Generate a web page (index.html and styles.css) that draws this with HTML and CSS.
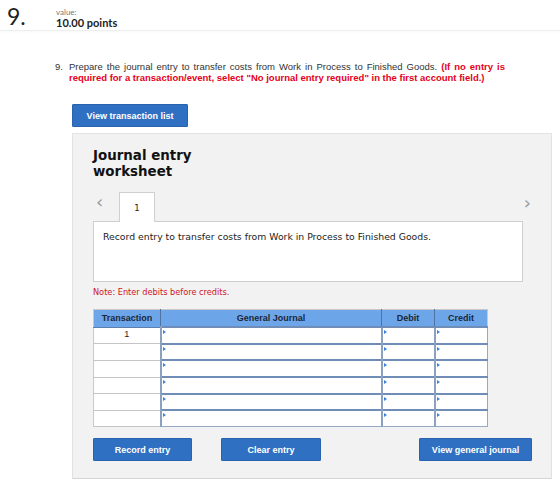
FILE: index.html
```html
<!DOCTYPE html>
<html lang="en">
<head>
    <meta charset="utf-8"/>
    <title>Question 9</title>
    <link rel="stylesheet" href="styles.css">
</head>
<body>
    <div class="q-header">
        <div class="q-num">9.</div>
        <div class="q-value">
            <div class="value-label">value:</div>
            <div class="value-points">10.00 points</div>
        </div>
    </div>

    <div class="prompt">
        <span class="prompt-num">9.</span>
        <div class="prompt-text">
            <p class="line-full">Prepare the journal entry to transfer costs from Work in Process to Finished Goods. <strong class="warn">(If no entry is</strong></p>
            <p><strong class="warn">required for a transaction/event, select "No journal entry required" in the first account field.)</strong></p>
        </div>
    </div>

    <button class="btn btn-list">View transaction list</button>

    <div class="worksheet">
        <h2 class="ws-title">Journal entry<br>worksheet</h2>

        <div class="tabs">
            <span class="arrow">&lsaquo;</span>
            <span class="tab">1</span>
            <span class="arrow arrow-next">&rsaquo;</span>
        </div>
        <div class="entry-box">Record entry to transfer costs from Work in Process to Finished Goods.</div>

        <div class="note">Note: Enter debits before credits.</div>

        <table class="journal">
            <thead>
                <tr>
                    <th class="c-tr">Transaction</th>
                    <th class="c-gj">General Journal</th>
                    <th class="c-amt">Debit</th>
                    <th class="c-amt">Credit</th>
                </tr>
            </thead>
            <tbody>
                <tr><td class="num">1</td><td class="inp"></td><td class="inp"></td><td class="inp"></td></tr>
                <tr><td class="num"></td><td class="inp"></td><td class="inp"></td><td class="inp"></td></tr>
                <tr><td class="num"></td><td class="inp"></td><td class="inp"></td><td class="inp"></td></tr>
                <tr><td class="num"></td><td class="inp"></td><td class="inp"></td><td class="inp"></td></tr>
                <tr><td class="num"></td><td class="inp"></td><td class="inp"></td><td class="inp"></td></tr>
                <tr><td class="num"></td><td class="inp"></td><td class="inp"></td><td class="inp"></td></tr>
            </tbody>
        </table>

        <div class="actions">
            <button class="btn btn-record">Record entry</button>
            <button class="btn btn-clear">Clear entry</button>
            <button class="btn btn-view">View general journal</button>
        </div>
    </div>
</body>
</html>
```

FILE: styles.css
```css
body {
    margin: 0;
    font-family: "Liberation Sans", Arial, sans-serif;
    color: #333;
    background: #fff;
}
.q-header {
    display: flex;
    align-items: flex-start;
    height: 31px;
    padding: 5px 0 0 7px;
    box-sizing: border-box;
    border-bottom: 1px solid #eee;
    box-shadow: 0 1px 2px rgba(0, 0, 0, 0.03);
}
.q-num {
    font-family: Lato, sans-serif;
    font-size: 23px;
    line-height: 22px;
    color: #222;
    width: 49px;
}
.q-value {
    font-family: Lato, sans-serif;
}
.value-label {
    font-size: 8px;
    line-height: 9px;
    color: #777;
    margin-top: 3px;
}
.value-points {
    font-size: 11px;
    line-height: 12px;
    font-weight: bold;
    color: #222;
}

.prompt {
    display: flex;
    margin: 30px 0 0 55px;
    font-size: 9.5px;
    line-height: 11px;
    color: #333;
}
.prompt-num {
    width: 14px;
}
.prompt-text {
    width: 436px;
}
.prompt-text p {
    margin: 0;
    white-space: nowrap;
}
.prompt-text .line-full {
    text-align: justify;
    text-align-last: justify;
    white-space: normal;
}
.warn {
    color: #e6001a;
}

.btn {
    display: block;
    border: 1px solid #2a63ad;
    border-radius: 1px;
    background: #2f70c2;
    color: #fff;
    font-family: "Liberation Sans", Arial, sans-serif;
    font-weight: bold;
    font-size: 9px;
    padding: 0;
    height: 23px;
}
.btn-list {
    margin: 21px 0 0 72px;
    width: 116px;
}

.worksheet {
    margin: 6px 0 0 72px;
    width: 480px;
    height: 346px;
    box-sizing: border-box;
    background: #f2f2f2;
    border: 1px solid #e2e2e2;
    border-bottom-color: #d4d4d4;
    padding: 14px 21px 0 20px;
}
.ws-title {
    margin: 0;
    font-family: "DejaVu Sans", Verdana, sans-serif;
    font-size: 13.4px;
    line-height: 16px;
    font-weight: bold;
    color: #111;
}

.tabs {
    display: flex;
    align-items: flex-end;
    margin-top: 11px;
    height: 30px;
    width: 438px;
}
.arrow {
    font-family: "DejaVu Sans", sans-serif;
    font-size: 18px;
    line-height: 18px;
    color: #9a9a9a;
    width: 26px;
    padding: 0 0 10px 3px;
    box-sizing: border-box;
}
.arrow-next {
    margin-left: auto;
    text-align: right;
    padding: 0 0 9px 0;
    width: 10px;
}
.tab {
    width: 36px;
    height: 30px;
    box-sizing: border-box;
    background: #fff;
    border: 1px solid #cfcfcf;
    border-bottom: none;
    font-family: "DejaVu Sans", Verdana, sans-serif;
    font-size: 8.5px;
    line-height: 30px;
    text-align: center;
    color: #222;
    position: relative;
    top: 1px;
    z-index: 1;
}
.entry-box {
    width: 430px;
    height: 61px;
    box-sizing: border-box;
    background: #fff;
    border: 1px solid #cfcfcf;
    padding: 9px 9px;
    font-family: "DejaVu Sans", Verdana, sans-serif;
    font-size: 9.3px;
    line-height: 12px;
    color: #222;
}
.note {
    margin-top: 5px;
    font-family: "DejaVu Sans", Verdana, sans-serif;
    font-size: 8.2px;
    line-height: 10px;
    color: #d0141e;
}

.journal {
    margin-top: 12px;
    border-collapse: collapse;
    table-layout: fixed;
    width: 395px;
    border: 1px solid #c9c9c9;
}
.journal th {
    height: 16px;
    padding: 0;
    background: #6ca6e8;
    border-right: 1px solid #4e73a0;
    border-bottom: 1px solid #5b80ad;
    font-size: 9px;
    font-weight: bold;
    color: #1c2636;
    text-align: center;
}
.journal th:last-child {
    border-right: none;
}
.c-tr { width: 66px; }
.c-gj { width: 220px; }
.c-amt { width: 52px; }
.journal td {
    height: 14.7px;
    padding: 0;
    background: #fff;
}
.journal td.num {
    border-bottom: 1px solid #c4c4c4;
    border-right: 1px solid #c4c4c4;
    text-align: center;
    vertical-align: top;
    font-size: 9px;
    line-height: 12px;
    color: #222;
}
.journal td.inp {
    position: relative;
    border: 1px solid #97aac4;
    border-top: 2px solid #6f8db6;
    border-left: 2px solid #8aa1c1;
}
/* small dropdown marker at the top-left of each entry field */
.journal td.inp::before {
    content: "";
    position: absolute;
    left: 1px;
    top: 2px;
    border-left: 3px solid #3d82dc;
    border-top: 2px solid transparent;
    border-bottom: 2px solid transparent;
}

.actions {
    display: flex;
    margin-top: 11px;
    width: 439px;
}
.btn-record {
    width: 99px;
}
.btn-clear {
    width: 100px;
    margin-left: 29px;
}
.btn-view {
    width: 113px;
    margin-left: auto;
}
```
